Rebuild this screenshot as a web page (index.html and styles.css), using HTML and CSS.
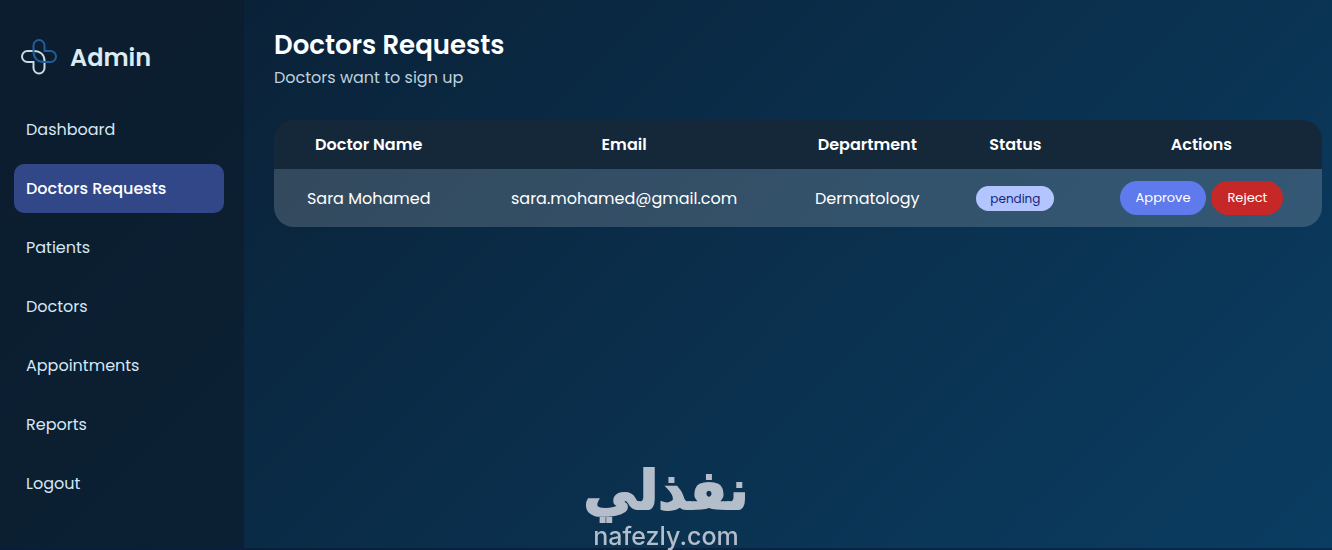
FILE: index.html
```html
<!DOCTYPE html>
<html lang="en">
<head>
<meta charset="utf-8">
<meta name="viewport" content="width=device-width, initial-scale=1">
<title>Doctors Requests</title>
<link rel="stylesheet" href="styles.css">
</head>
<body>
<div class="app">
  <aside class="sidebar">
    <div class="brand">
      <svg class="brand-icon" viewBox="0 0 36 36" fill="none" stroke-width="2" aria-hidden="true">
        <path stroke="#c6dbe5" d="M12.500 12H6.500a5.300 5.300 0 0 0 0 11h6v6a5.300 5.300 0 0 0 11 0V22c0-6-4-10-11-10Z"/>
        <path stroke="#1f5f9f" d="M23.500 12V6.500a5.300 5.300 0 0 0-11 0V12c0 7 4 11 11 11h6a5.300 5.300 0 0 0 0-11Z"/>
      </svg>
      <span class="brand-name">Admin</span>
    </div>
    <nav class="menu">
      <a class="menu-link" href="#">Dashboard</a>
      <a class="menu-link active" href="#" aria-current="page">Doctors Requests</a>
      <a class="menu-link" href="#">Patients</a>
      <a class="menu-link" href="#">Doctors</a>
      <a class="menu-link" href="#">Appointments</a>
      <a class="menu-link" href="#">Reports</a>
      <a class="menu-link" href="#">Logout</a>
    </nav>
  </aside>
  <main class="content">
    <h1 class="title">Doctors Requests</h1>
    <p class="subtitle">Doctors want to sign up</p>
    <table class="requests">
      <thead>
        <tr><th>Doctor Name</th><th>Email</th><th>Department</th><th>Status</th><th>Actions</th></tr>
      </thead>
      <tbody>
        <tr>
          <td>Sara Mohamed</td>
          <td>sara.mohamed@gmail.com</td>
          <td>Dermatology</td>
          <td><span class="status">pending</span></td>
          <td>
            <div class="actions">
              <button class="btn approve" type="button">Approve</button>
              <button class="btn reject" type="button">Reject</button>
            </div>
          </td>
        </tr>
      </tbody>
    </table>
  </main>
</div>
<div class="watermark">
  <span class="watermark-ar" lang="ar" dir="rtl">نفذلي</span>
  <span class="watermark-en">nafezly.com</span>
</div>
</body>
</html>
```

FILE: styles.css
```css
* {
  box-sizing: border-box;
}

body {
  margin: 0;
  font-family: Poppins, Inter, "Open Sans", sans-serif;
  font-size: 16px;
  line-height: 25px;
  color: #fff;
  background: linear-gradient(135deg, #0a1e32, #0a3d62) fixed;
}

.app {
  display: flex;
  min-height: 100vh;
  border-bottom: 2px solid rgba(8, 20, 50, 0.5);
}

.sidebar {
  flex: 0 0 244px;
  padding: 32px 20px 20px 14px;
  background: rgba(12, 28, 44, 0.7);
}

.brand {
  display: flex;
  align-items: center;
  gap: 13px;
  height: 49px;
  padding-left: 7px;
  margin-bottom: 24px;
}

.brand-icon {
  width: 36px;
  height: 36px;
}

.brand-name {
  font-size: 24px;
  font-weight: 600;
  line-height: 36px;
  padding-top: 3px;
  color: #dceaf4;
}

.menu {
  display: flex;
  flex-direction: column;
  gap: 10px;
}

.menu-link {
  padding: 12px;
  color: #d6e6f3;
  text-decoration: none;
  border-radius: 10px;
}

.menu-link.active {
  font-weight: 500;
  color: #fff;
  background: #314787;
}

.content {
  flex: 1;
  padding: 26px 10px 0 30px;
}

.title {
  margin: 0;
  font-size: 26px;
  font-weight: 600;
  line-height: 39px;
}

.subtitle {
  margin: 0 0 30px;
  color: #bfd0de;
}

.requests {
  width: 100%;
  border-collapse: collapse;
  text-align: center;
  border-radius: 20px;
  overflow: hidden;
}

.requests th {
  padding: 12px;
  font-weight: 600;
  background: #152839;
}

.requests td {
  padding: 12px;
  background: rgba(255, 255, 255, 0.17);
}

.status {
  display: inline-block;
  padding: 0 14px;
  font-size: 12px;
  line-height: 25px;
  color: #1a237e;
  background: #b3c5ff;
  border-radius: 13px;
}

.actions {
  display: flex;
  justify-content: center;
  gap: 5px;
}

.btn {
  height: 34px;
  padding: 0 16px;
  font: 400 13px/20px Poppins, Inter, "Open Sans", sans-serif;
  color: #fff;
  border: 0;
  border-radius: 17px;
  cursor: pointer;
}

.approve { background: #5f7aec; }
.reject { background: #c62828; }

.watermark {
  position: fixed;
  bottom: 0;
  left: 50%;
  display: flex;
  flex-direction: column;
  align-items: center;
  transform: translateX(-50%);
  color: #b4bdca;
  pointer-events: none;
}

.watermark-ar {
  font: bold 54px/62px "DejaVu Sans", sans-serif;
  -webkit-text-stroke: 2px #b4bdca;
}

.watermark-en {
  font: 500 25px/28px Inter, sans-serif;
}
```
